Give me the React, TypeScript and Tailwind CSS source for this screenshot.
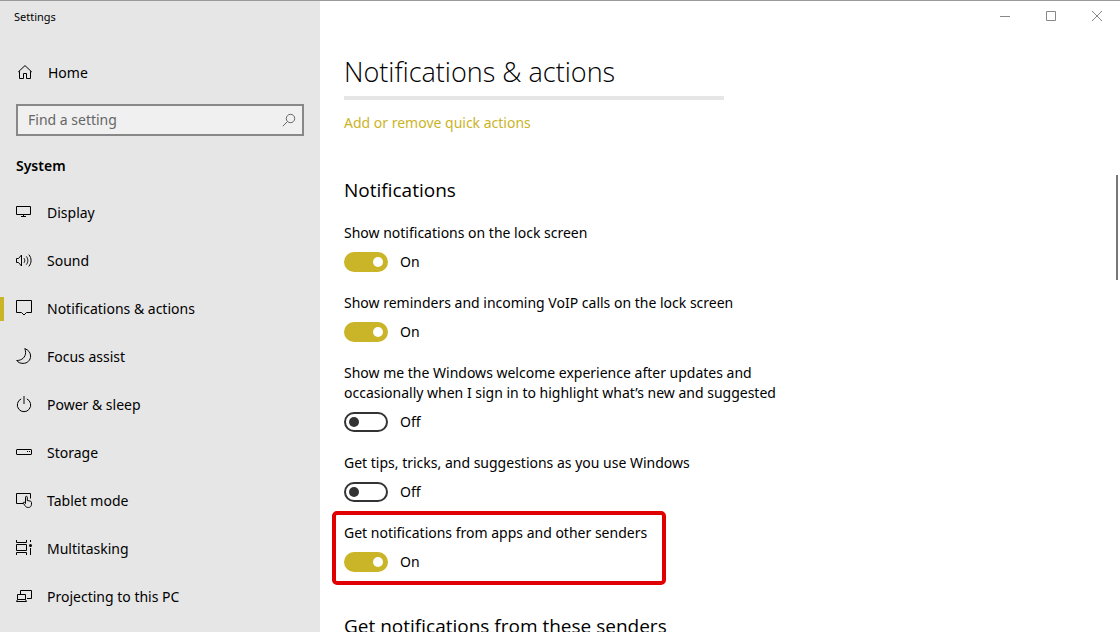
import { useState, type ReactNode } from 'react'

interface NavItem {
  label: string
  icon: ReactNode
}

interface Setting {
  id: string
  label: string
  on: boolean
  marked?: boolean
}

function Icon({ children }: { children: ReactNode }) {
  return (
    <svg width="16" height="18" viewBox="0 0 16 18" fill="none" stroke="currentColor" className="shrink-0 overflow-visible" aria-hidden="true">
      {children}
    </svg>
  )
}

const HomeIcon = (
  <Icon>
    <path d="M2.2 8 9 1.6 15.8 8M3.5 7.2v7.3h4V9.5h3v5h4V7.2" />
  </Icon>
)

const NAV: NavItem[] = [
  {
    label: 'Display',
    icon: (
      <Icon>
        <path d="M.5 2.5h14v8H.5zM5 12.5h5M7.5 10.5v2" />
      </Icon>
    ),
  },
  {
    label: 'Sound',
    icon: (
      <Icon>
        <path d="M.5 6.5h2L5.5 3v11l-3-3.500h-2z" />
        <path d="M8 6.200c1 1.300 1 3.300 0 4.600M10.300 4.400c2 2.400 2 5.800 0 8.200M12.800 2.600c3 3.400 3 8.400 0 11.800" />
      </Icon>
    ),
  },
  {
    label: 'Notifications & actions',
    icon: (
      <Icon>
        <path d="M.5.5h15v12h-5L8 15l-2.500-2.500h-5z" />
      </Icon>
    ),
  },
  {
    label: 'Focus assist',
    icon: (
      <Icon>
        <path d="M8.800.600c3.800 1.400 5.800 4.200 5.800 7.400 0 4.300-3.300 7.400-7.500 7.400-2.800 0-5-1-6.400-2.900C6 12.600 9.600 9 9.600 4.600c0-1.500-.3-2.800-.8-4z" />
      </Icon>
    ),
  },
  {
    label: 'Power & sleep',
    icon: (
      <Icon>
        <path d="M5.200 2.900a6.700 6.700 0 1 0 5.600 0" />
        <path d="M8 0v8" stroke="#777" strokeWidth="2" />
      </Icon>
    ),
  },
  {
    label: 'Storage',
    icon: (
      <Icon>
        <rect x=".5" y="5.500" width="15" height="5" rx=".5" />
        <path d="M11 7.500h1M13 7.500h1" />
      </Icon>
    ),
  },
  {
    label: 'Tablet mode',
    icon: (
      <Icon>
        <path d="M7 11.500H.5v-10h14v5" />
        <path d="M9.500 11.500V5.200c0-1.200 1.800-1.200 1.800 0v3.300l3 .6c.8.200 1.200.7 1.200 1.500v1.600c0 2-1.300 3.300-3.200 3.300-1.600 0-2.500-.6-3.300-1.800l-1.700-2.600c-.3-.9.800-1.400 1.400-.7z" />
      </Icon>
    ),
  },
  {
    label: 'Multitasking',
    icon: (
      <Icon>
        <path d="M.5 0v2.500h10V0M.5 4.500h10v6H.5zM.5 15v-2.500h10V15M14.500 0v2M14.500 8v7" />
        <circle cx="14.500" cy="5.500" r="1.500" fill="currentColor" stroke="none" />
      </Icon>
    ),
  },
  {
    label: 'Projecting to this PC',
    icon: (
      <Icon>
        <path d="M4.500 6V2.500h11v8H11" />
        <path d="M1.500 11.500v-5h8v5M.5 13.500l1-2h8l1 2z" />
      </Icon>
    ),
  },
]

const SETTINGS: Setting[] = [
  { id: 'lock', label: 'Show notifications on the lock screen', on: true },
  { id: 'voip', label: 'Show reminders and incoming VoIP calls on the lock screen', on: true },
  {
    id: 'welcome',
    label: 'Show me the Windows welcome experience after updates and occasionally when I sign in to highlight what’s new and suggested',
    on: false,
  },
  { id: 'tips', label: 'Get tips, tricks, and suggestions as you use Windows', on: false },
  { id: 'apps', label: 'Get notifications from apps and other senders', on: true, marked: true },
]

function Toggle({ setting }: { setting: Setting }) {
  const [on, setOn] = useState(setting.on)

  return (
    <div className="relative w-fit">
      <label htmlFor={setting.id} className="block">{setting.label}</label>
      <div className="mt-2 flex h-[22px] items-center gap-3">
        <input
          id={setting.id}
          type="checkbox"
          role="switch"
          checked={on}
          onChange={e => setOn(e.target.checked)}
          className="flex h-5 w-11 appearance-none items-center rounded-full border-2 border-[#333] px-[3px] before:size-[10px] before:rounded-full before:bg-[#333] checked:justify-end checked:border-[#cab428] checked:bg-[#cab428] checked:before:bg-white"
        />
        <span>{on ? 'On' : 'Off'}</span>
      </div>
      {/* highlight frame */}
      {setting.marked && (
        <div className="pointer-events-none absolute -top-3 -right-[19px] -bottom-3 -left-3 rounded-[5px] border-4 border-[#e00000]" />
      )}
    </div>
  )
}

export default function App() {
  const [active, setActive] = useState('Notifications & actions')

  return (
    <div className="flex h-screen overflow-hidden border-t border-[#999] bg-white font-['Noto_Sans','Open_Sans',sans-serif] text-[14px] leading-5 text-black">
      {/* sidebar */}
      <aside className="flex w-80 shrink-0 flex-col bg-[#e6e6e6]">
        <div className="px-[14px] pt-2 text-[11px] leading-4">Settings</div>
        <a href="#home" className="mt-9 flex h-6 items-center gap-4 px-4">
          {HomeIcon}
          Home
        </a>
        <label className="mx-4 mt-[19px] flex h-8 shrink-0 items-center border-2 border-[#888] bg-[#f0f0f0] pr-[6px] pl-[10px]">
          <input
            type="text"
            aria-label="Find a setting"
            placeholder="Find a setting"
            className="min-w-0 flex-1 bg-transparent outline-none placeholder:text-[#666]"
          />
          <svg width="14" height="14" viewBox="0 0 14 14" fill="none" stroke="#666" aria-hidden="true">
            <circle cx="8.500" cy="5.500" r="4.200" />
            <path d="M5.500 8.500.8 13.200" />
          </svg>
        </label>
        <h2 className="mt-5 px-4 font-semibold">System</h2>
        <nav className="mt-[13px] flex flex-col">
          {NAV.map(item => (
            <button
              key={item.label}
              onClick={() => setActive(item.label)}
              className="flex h-12 shrink-0 items-center text-left"
            >
              <span className={active === item.label ? 'h-6 w-1 bg-[#cab428]' : 'h-6 w-1'} />
              <span className="flex items-center gap-[15px] pl-3">
                {item.icon}
                {item.label}
              </span>
            </button>
          ))}
        </nav>
      </aside>

      <main className="relative min-w-0 flex-1">
        {/* window buttons */}
        <div className="flex h-[30px] justify-end text-[#888]">
          <button aria-label="Minimize" className="flex w-[46px] items-center justify-center">
            <svg width="10" height="10" viewBox="0 0 10 10" stroke="currentColor"><path d="M0 5.500h10" /></svg>
          </button>
          <button aria-label="Maximize" className="flex w-[46px] items-center justify-center">
            <svg width="10" height="10" viewBox="0 0 10 10" fill="none" stroke="currentColor"><path d="M.5.5h9v9h-9z" /></svg>
          </button>
          <button aria-label="Close" className="flex w-[46px] items-center justify-center">
            <svg width="10" height="10" viewBox="0 0 10 10" stroke="currentColor"><path d="m0 0 10 10M10 0 0 10" /></svg>
          </button>
        </div>

        <div className="px-6 pt-[21px]">
          <h1 className="font-['Open_Sans',sans-serif] text-[27px] leading-10 font-light">Notifications &amp; actions</h1>
          <div className="mt-1 h-1 max-w-[380px] bg-[#e6e6e6]" />
          <a href="#quick-actions" className="mt-[13px] block w-fit text-[#cab428]">Add or remove quick actions</a>

          <h2 className="mt-[43px] font-['Open_Sans',sans-serif] text-[19px] leading-7">Notifications</h2>
          <div className="mt-[19px] flex max-w-[450px] flex-col gap-5">
            {SETTINGS.map(s => (
              <Toggle key={s.id} setting={s} />
            ))}
          </div>
          <h2 className="mt-[39px] font-['Open_Sans',sans-serif] text-[19px] leading-7">Get notifications from these senders</h2>
        </div>

        {/* scroll thumb */}
        <div className="absolute top-[174px] right-[2px] h-[105px] w-[2px] bg-[#777]" />
      </main>
    </div>
  )
}
